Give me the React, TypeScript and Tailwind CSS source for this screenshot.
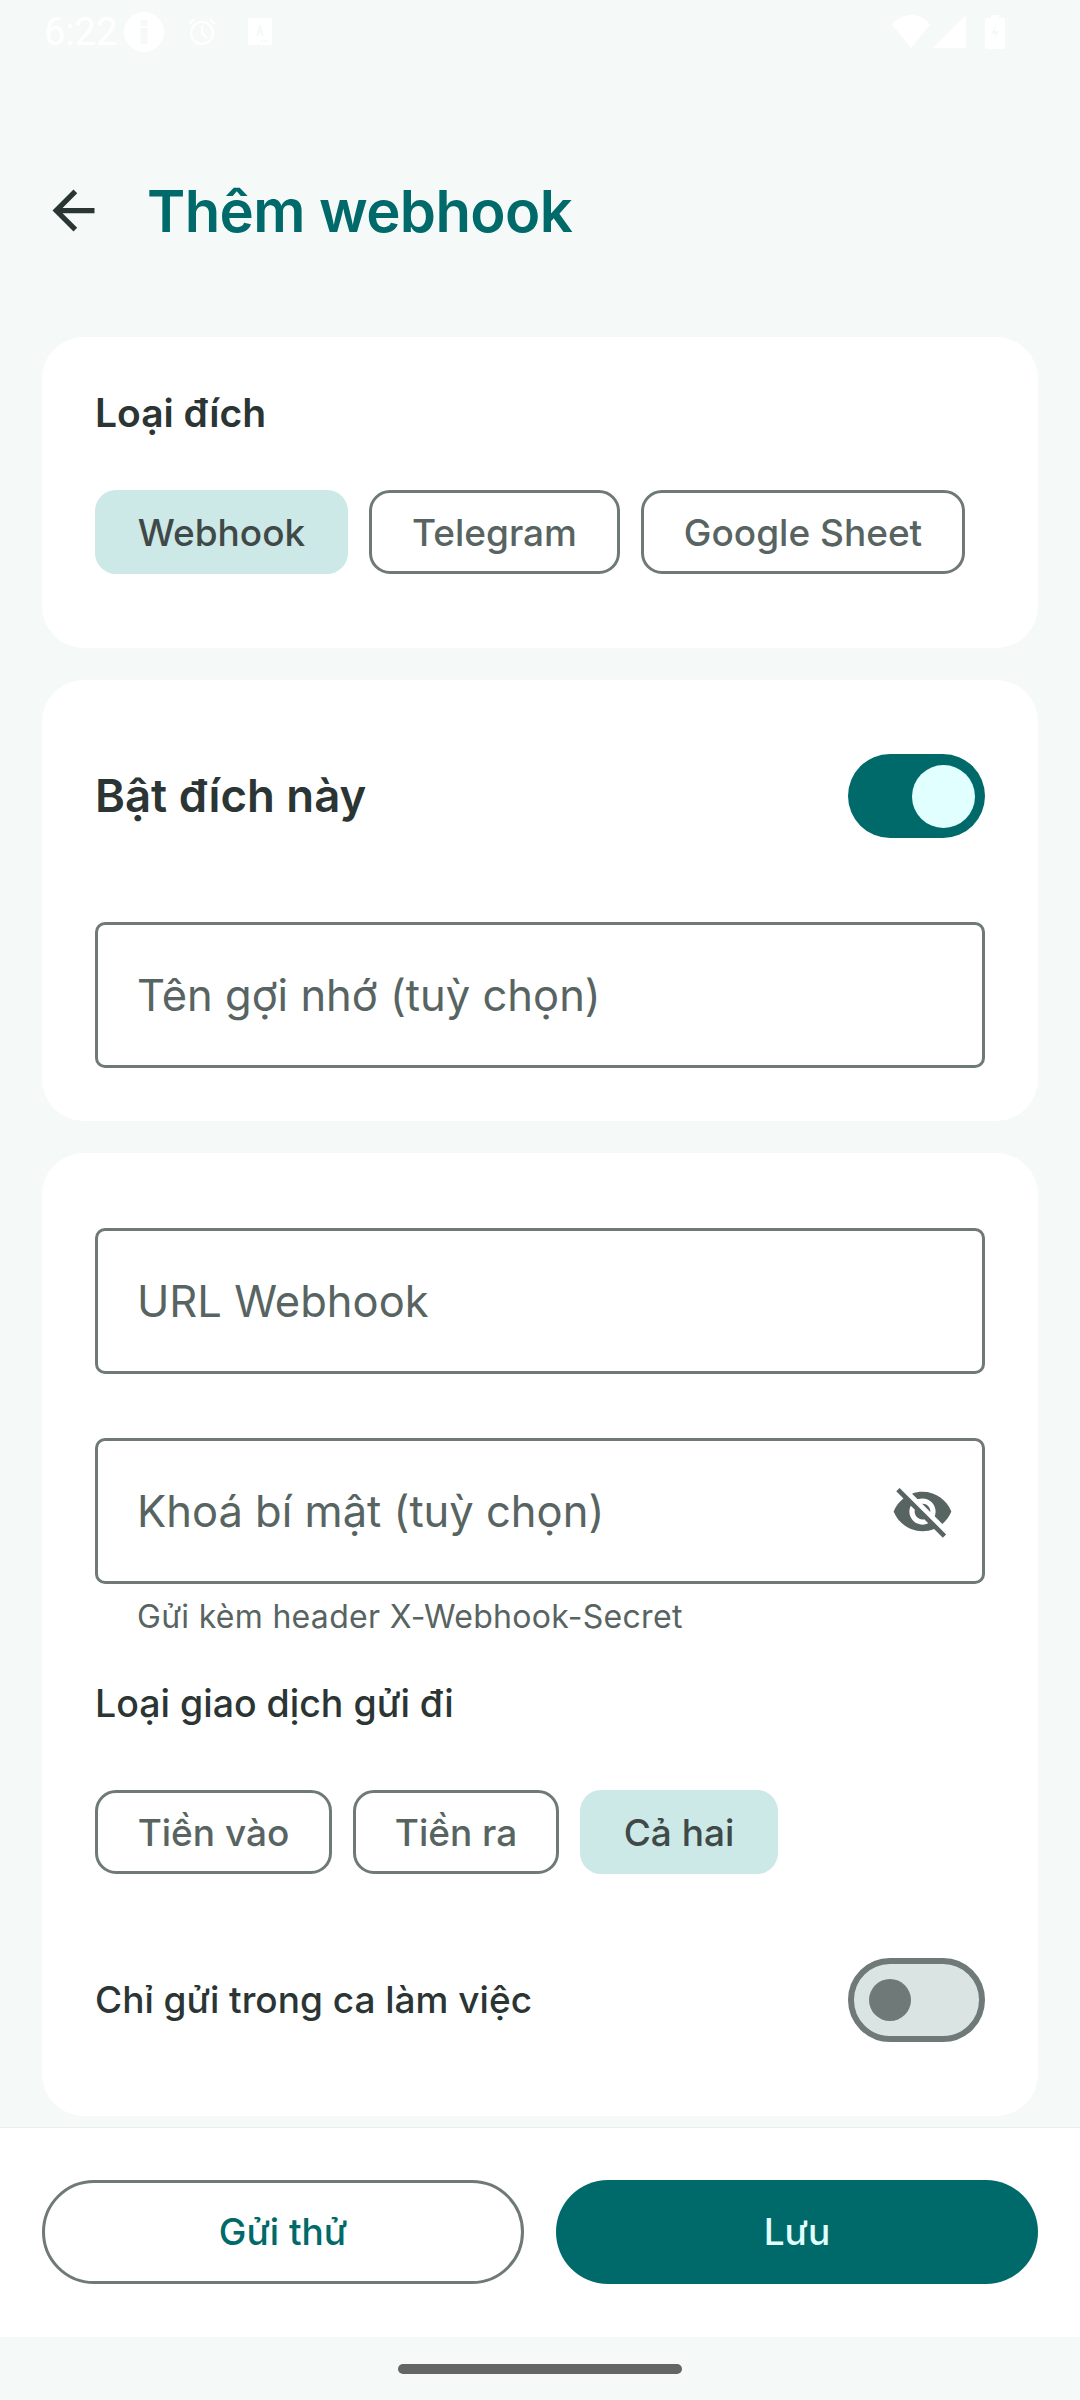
import React from "react";

const font = { fontFamily: 'Inter, "Noto Sans", sans-serif' };

function Chip({ label, active, w }: { label: string; active?: boolean; w: string }) {
  return (
    <div
      className={
        (active
          ? "bg-[#cce8e7] text-[#3f4948] "
          : "border-[3px] border-[#6f7978] text-[#586462] ") +
        w +
        " h-[84px] rounded-[21px] flex items-center justify-center pt-[1px] text-[37px] font-medium"
      }
    >
      {label}
    </div>
  );
}

function Field({ label, icon }: { label: string; icon?: boolean }) {
  return (
    <div className="h-[146px] rounded-[10px] border-[3px] border-[#6f7978] pl-[39px] pr-[28px] flex items-center justify-between text-[#586462] text-[43.5px] bg-white">
      <span className="pt-[2px]">{label}</span>
      {icon && (
        <svg width="63" height="63" viewBox="0 0 24 24" fill="#586462">
          <path d="M12 7c2.76 0 5 2.24 5 5 0 .65-.13 1.26-.36 1.83l2.92 2.92c1.51-1.26 2.7-2.89 3.43-4.75-1.73-4.39-6-7.5-11-7.5-1.4 0-2.74.25-3.98.7l2.16 2.16C10.74 7.13 11.35 7 12 7zM2 4.27l2.28 2.28.46.46C3.08 8.3 1.78 10.02 1 12c1.73 4.39 6 7.5 11 7.5 1.55 0 3.03-.3 4.38-.84l.42.42L19.73 22 21 20.73 3.27 3 2 4.27zM7.53 9.8l1.55 1.55c-.05.21-.08.43-.08.65 0 1.66 1.34 3 3 3 .22 0 .44-.03.65-.08l1.55 1.55c-.67.33-1.41.53-2.2.53-2.76 0-5-2.24-5-5 0-.79.2-1.53.53-2.2zm4.31-.78l3.15 3.15.02-.16c0-1.66-1.34-3-3-3l-.17.01z" />
        </svg>
      )}
    </div>
  );
}

export default function App() {
  return (
    <div className="w-[1080px] h-[2400px] bg-[#f5faf8] flex flex-col overflow-hidden" style={font}>
      {/* Status bar */}
      <div className="h-[63px] flex items-center justify-between pl-[44px] pr-[75px] text-white shrink-0">
        <div className="flex items-center">
          <span className="text-[38px] leading-none font-normal w-[80px]" style={{ fontFamily: "Roboto, sans-serif" }}>6:22</span>
          <svg width="40" height="40" viewBox="0 0 40 40">
            <circle cx="20" cy="20" r="20" fill="#fff" />
            <rect x="16.5" y="8" width="7" height="6" fill="#f5faf8" />
            <rect x="16.5" y="16" width="7" height="16" fill="#f5faf8" />
          </svg>
          <svg width="30" height="30" viewBox="0 0 30 30" className="ml-[23px]" fill="none" stroke="#fff" strokeWidth="2">
            <circle cx="15" cy="16" r="11" />
            <path d="M15 9v7l5 5M2 7l5-5M28 7l-5-5" />
          </svg>
          <svg width="24" height="27" viewBox="0 0 24 27" className="ml-[31px]">
            <rect width="24" height="27" rx="2" fill="#fff" />
            <path d="M9.5 18 12 7l2.5 11M10 14h4" stroke="#f5faf8" strokeWidth="2.4" fill="none" />
            <path d="M13 23h2M16 23h2M19 23h2" stroke="#f5faf8" strokeWidth="2" />
          </svg>
        </div>
        <div className="flex items-center">
          <svg width="38" height="33" viewBox="0 0 38 33">
            <path d="M0 9.5C5 3.5 12 0 19 0s14 3.5 19 9.5L19 33z" fill="#fff" />
          </svg>
          <svg width="33" height="33" viewBox="0 0 33 33" className="ml-[3px]">
            <path d="M33 0v33H0z" fill="#fff" />
          </svg>
          <svg width="20" height="34" viewBox="0 0 20 34" className="ml-[19px]">
            <path d="M6 0h8v3h4a2 2 0 0 1 2 2v27a2 2 0 0 1-2 2H2a2 2 0 0 1-2-2V5a2 2 0 0 1 2-2h4z" fill="#fff" />
            <path d="M11 9 6 19h4l-1 7 5-10h-4z" fill="#f5faf8" />
          </svg>
        </div>
      </div>

      {/* Header */}
      <div className="h-[274px] shrink-0 flex items-center pl-[42px] pt-[20px]">
        <svg width="63" height="63" viewBox="0 0 24 24" fill="#2b3534">
          <path d="M20 11H7.83l5.59-5.59L12 4l-8 8 8 8 1.41-1.41L7.83 13H20v-2z" />
        </svg>
        <h1 className="ml-[42px] pt-[2px] text-[58px] font-semibold text-[#006a6a] tracking-[-0.6px]">Thêm webhook</h1>
      </div>

      {/* Content */}
      <div className="flex-1 flex flex-col gap-[32px] px-[42px]">
        <section className="h-[311px] rounded-[42px] bg-white px-[53px] flex flex-col">
          <div className="h-[153px] flex items-center text-[39px] font-semibold text-[#2b3534]">Loại đích</div>
          <div className="flex gap-[21px]">
            <Chip label="Webhook" active w="w-[253px]" />
            <Chip label="Telegram" w="w-[251px]" />
            <Chip label="Google Sheet" w="w-[324px]" />
          </div>
        </section>

        <section className="h-[441px] rounded-[42px] bg-white px-[53px] pt-[74px] flex flex-col gap-[84px]">
          <div className="flex items-center justify-between">
            <span className="text-[45.5px] font-semibold text-[#2b3534]">Bật đích này</span>
            <div className="w-[137px] h-[84px] rounded-full bg-[#006a6a] flex items-center justify-end pr-[10px]">
              <div className="w-[63px] h-[63px] rounded-full bg-[#e0fffe]" />
            </div>
          </div>
          <Field label="Tên gợi nhớ (tuỳ chọn)" />
        </section>

        <section className="h-[963px] rounded-[42px] bg-white px-[53px] pt-[75px] flex flex-col">
          <Field label="URL Webhook" />
          <div className="h-[64px]" />
          <Field label="Khoá bí mật (tuỳ chọn)" icon />
          <div className="h-[64px] flex items-center pl-[42px] pt-[1px] text-[32px] tracking-[0.3px] text-[#586462]">Gửi kèm header X-Webhook-Secret</div>
          <div className="h-[110px] flex items-center text-[37.5px] font-medium text-[#2b3534] pt-[2px]">Loại giao dịch gửi đi</div>
          <div className="flex gap-[21px] mt-[32px]">
            <Chip label="Tiền vào" w="w-[237px]" />
            <Chip label="Tiền ra" w="w-[206px]" />
            <Chip label="Cả hai" active w="w-[198px]" />
          </div>
          <div className="flex items-center justify-between mt-[84px]">
            <span className="text-[37px] font-medium text-[#2b3534]">Chỉ gửi trong ca làm việc</span>
            <div className="w-[137px] h-[84px] rounded-full bg-[#dae5e3] border-[6px] border-[#6f7978] flex items-center pl-[15px]">
              <div className="w-[42px] h-[42px] rounded-full bg-[#6f7978]" />
            </div>
          </div>
        </section>
      </div>

      {/* Bottom actions */}
      <div className="h-[210px] bg-white border-t border-[#eaefed] shrink-0 flex items-center justify-between px-[42px] pb-[1px] text-[37px] font-medium">
        <div className="w-[482px] h-[104px] rounded-full border-[3px] border-[#6f7978] text-[#006a6a] flex items-center justify-center">Gửi thử</div>
        <div className="w-[482px] h-[104px] rounded-full bg-[#006a6a] text-[#e0fffe] flex items-center justify-center">Lưu</div>
      </div>

      {/* Gesture bar */}
      <div className="h-[63px] shrink-0 flex justify-center pt-[27px]">
        <div className="w-[284px] h-[10px] rounded-full bg-[#646665]" />
      </div>
    </div>
  );
}
